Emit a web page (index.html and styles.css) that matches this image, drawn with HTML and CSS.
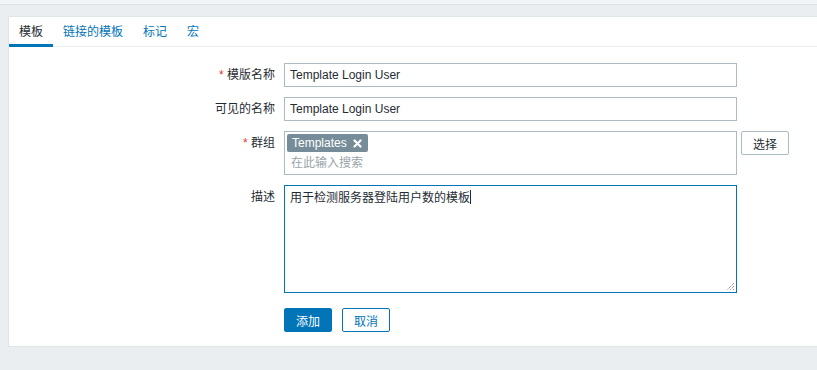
FILE: index.html
```
<!DOCTYPE html>
<html lang="zh-CN">
<head>
<meta charset="utf-8">
<title>模板</title>
<link rel="stylesheet" href="styles.css">
</head>
<body>
<div class="topstrip"></div>
<div class="panel">
  <ul class="tabs">
    <li class="tab active">模板</li>
    <li class="tab">链接的模板</li>
    <li class="tab">标记</li>
    <li class="tab">宏</li>
  </ul>
  <div class="form">
    <label class="label"><span class="req">*</span> 模版名称</label>
    <div class="field"><div class="input">Template Login User</div></div>

    <label class="label">可见的名称</label>
    <div class="field"><div class="input">Template Login User</div></div>

    <label class="label label-top"><span class="req">*</span> 群组</label>
    <div class="field field-row">
      <div class="multiselect">
        <span class="tag">Templates <svg class="tag-x" width="9" height="9" viewBox="0 0 9 9"><path d="M1.5 1.5 L7.5 7.5 M7.5 1.5 L1.5 7.5" stroke="#fff" stroke-width="2.2" stroke-linecap="round"/></svg></span>
        <div class="placeholder">在此输入搜索</div>
      </div>
      <button class="btn btn-alt">选择</button>
    </div>

    <label class="label label-top">描述</label>
    <div class="field">
      <div class="textarea">用于检测服务器登陆用户数的模板<span class="caret"></span>
        <svg class="grip" width="10" height="10" viewBox="0 0 10 10"><path d="M9 2 L2 9 M9 5 L5 9 M9 8 L8 9" stroke="#6b6b6b" stroke-width="1" stroke-dasharray="1 1"/></svg>
      </div>
    </div>

    <div class="spacer"></div>
    <div class="field actions">
      <button class="btn btn-primary">添加</button>
      <button class="btn btn-secondary">取消</button>
    </div>
  </div>
</div>
</body>
</html>
```
FILE: styles.css
```
html, body {
  margin: 0;
  padding: 0;
}
body {
  background: #ebeef0;
  font-family: "Liberation Sans", Arial, "Noto Sans CJK SC", sans-serif;
  font-size: 12px;
  color: #1f2c33;
  overflow: hidden;
  width: 817px;
  height: 370px;
}
.topstrip {
  height: 4px;
  background: #f3f4f5;
  border-bottom: 1px solid #dfe3e6;
}
.panel {
  margin: 11px 0 0 8px;
  width: 840px;
  background: #fff;
  border: 1px solid #dfe4e7;
  padding-bottom: 14px;
}
.tabs {
  list-style: none;
  margin: 0;
  padding: 0;
  display: flex;
  border-bottom: 1px solid #ebeef0;
}
.tab {
  padding: 0 10px;
  height: 27px;
  line-height: 31px;
  color: #0275b8;
  border-bottom: 3px solid transparent;
  margin-bottom: -1px;
}
.tab.active {
  color: #1f2c33;
  border-bottom-color: #0275b8;
}
.form {
  display: grid;
  grid-template-columns: 266px 1fr;
  column-gap: 9px;
  row-gap: 10px;
  padding-top: 16px;
}
.label {
  text-align: right;
  line-height: 24px;
  white-space: nowrap;
}
.req {
  color: #e33734;
}
.field-row {
  display: flex;
  align-items: flex-start;
  gap: 4px;
}
.input {
  width: 441px;
  height: 22px;
  line-height: 22px;
  border: 1px solid #acbbc2;
  padding: 0 5px;
}
.multiselect {
  width: 453px;
  height: 44px;
  border: 1px solid #acbbc2;
  padding: 2px 0 0 2px;
  box-sizing: border-box;
}
.tag {
  display: inline-flex;
  align-items: center;
  height: 18px;
  background: #768d99;
  color: #fff;
  padding: 0 6px 0 5px;
  border-radius: 2px;
  gap: 6px;
  line-height: 18px;
}
.tag-x {
  display: block;
}
.placeholder {
  color: #9aa4a9;
  padding-left: 4px;
  line-height: 22px;
}
.textarea {
  position: relative;
  width: 441px;
  height: 102px;
  border: 1px solid #0275b8;
  padding: 4px 5px 0;
  line-height: 16px;
}
.caret {
  display: inline-block;
  width: 1px;
  height: 14px;
  background: #1f2c33;
  vertical-align: -2px;
}
.grip {
  position: absolute;
  right: 1px;
  bottom: 1px;
}
.spacer {
  height: 0;
}
.actions {
  display: flex;
  gap: 10px;
  margin-top: 5px;
}
.btn {
  font-family: inherit;
  font-size: 12px;
  height: 24px;
  width: 48px;
  padding: 0;
  border-radius: 2px;
  cursor: pointer;
  box-sizing: border-box;
}
.btn-primary {
  background: #0275b8;
  color: #fff;
  border: 1px solid #0275b8;
}
.btn-secondary {
  background: #fff;
  color: #0275b8;
  border: 1px solid #0275b8;
}
.btn-alt {
  background: #fff;
  color: #1f2c33;
  border: 1px solid #acbbc2;
}
```
